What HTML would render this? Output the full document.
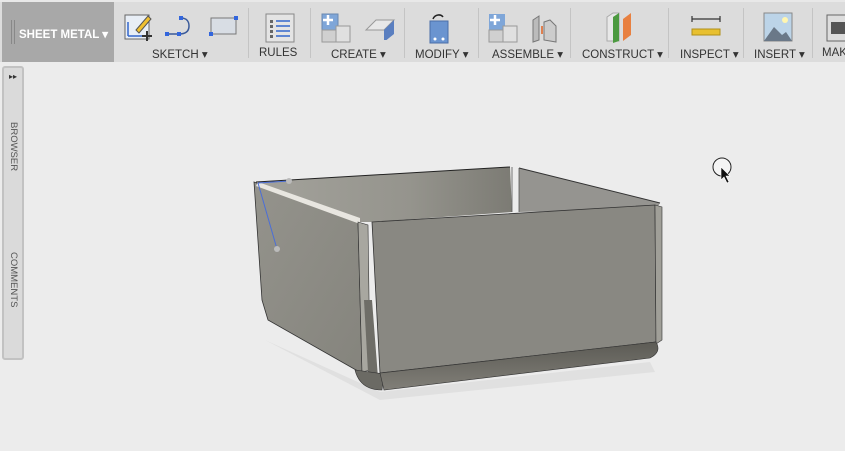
<!DOCTYPE html><html><head><meta charset="utf-8"><style>
*{margin:0;padding:0;box-sizing:border-box}
body{width:845px;height:451px;background:#ececec;font-family:"Liberation Sans",sans-serif;overflow:hidden;position:relative}
.tb{position:absolute;left:0;top:0;width:845px;height:62px;background:#dcdcdc;border-top:2px solid #e8e8e8}
.sm{position:absolute;left:2px;top:0;width:112px;height:60px;background:#a8a8a8;color:#fff;font-weight:bold;font-size:11.5px}
.sm span{position:absolute;left:17px;top:25px}
.grip{position:absolute;left:9px;top:18px;width:4px;height:24px;border-left:1px solid #888;border-right:1px solid #888}
.lbl{position:absolute;top:45px;font-size:11.5px;color:#333;white-space:nowrap}
.sep{position:absolute;top:6px;width:1px;height:50px;background:#c4c4c4}
.ic{position:absolute}
.side{position:absolute;left:2px;top:66px;width:22px;height:294px;background:#dadada;border:2px solid #c2c2c2;border-radius:3px}
.vt{position:absolute;left:4px;font-size:9.5px;color:#555;writing-mode:vertical-rl}
</style></head><body>
<div class="tb">
<div class="sm"><div class="grip"></div><span>SHEET METAL ▾</span></div>
<svg class="ic" style="left:124px;top:10px" width="30" height="30"><rect x="1" y="3" width="24" height="24" fill="#e8eef6" stroke="#666"/><path d="M4 24V10M4 24h14" stroke="#3366cc" stroke-width="1.5"/><path d="M12 18l12-14 3 3-12 14z" fill="#f0c030" stroke="#555"/><path d="M18 24h10M23 19v10" stroke="#333" stroke-width="2"/></svg>
<svg class="ic" style="left:164px;top:12px" width="32" height="24"><path d="M3 20h12c8 0 10-4 10-8s-2-8-8-8" fill="none" stroke="#3a5a9a" stroke-width="1.5"/><rect x="1" y="18" width="4" height="4" fill="#3366dd"/><rect x="13" y="18" width="4" height="4" fill="#3366dd"/><rect x="15" y="2" width="4" height="4" fill="#3366dd"/></svg>
<svg class="ic" style="left:208px;top:12px" width="32" height="24"><rect x="3" y="4" width="25" height="16" fill="#d8dde4" stroke="#777"/><rect x="1" y="18" width="4" height="4" fill="#3366dd"/><rect x="26" y="2" width="4" height="4" fill="#3366dd"/></svg>
<div class="lbl" style="left:152px">SKETCH ▾</div>
<div class="sep" style="left:248px"></div>
<svg class="ic" style="left:264px;top:11px" width="32" height="30"><rect x="2" y="1" width="28" height="28" fill="#e4e4e4" stroke="#888"/><g stroke="#3366cc" stroke-width="1.5"><path d="M12 8h14M12 13h14M12 18h14M12 23h14"/></g><g fill="#666"><rect x="6" y="7" width="3" height="3"/><rect x="6" y="12" width="3" height="3"/><rect x="6" y="17" width="3" height="3"/><rect x="6" y="22" width="3" height="3"/></g></svg>
<div class="lbl" style="left:259px">RULES</div>
<div class="sep" style="left:310px"></div>
<svg class="ic" style="left:320px;top:10px" width="34" height="32"><rect x="2" y="2" width="16" height="16" fill="#7fa6d8" stroke="#6a88b0"/><rect x="2" y="18" width="14" height="12" fill="#d0d0d0" stroke="#999"/><rect x="16" y="14" width="14" height="16" fill="#e0e0e0" stroke="#999"/><path d="M8 3v10M3 8h10" stroke="#fff" stroke-width="2.5"/></svg>
<svg class="ic" style="left:364px;top:12px" width="32" height="26"><path d="M2 16l10-10h18l-10 10z" fill="#e8e8e8" stroke="#999"/><path d="M20 16l10-10v14l-10 8z" fill="#5a7fc0"/></svg>
<div class="lbl" style="left:331px">CREATE ▾</div>
<div class="sep" style="left:404px"></div>
<svg class="ic" style="left:427px;top:9px" width="24" height="34"><rect x="3" y="10" width="18" height="22" fill="#6a94d0" stroke="#4a6ea8"/><path d="M6 8c2-5 8-5 10-2" fill="none" stroke="#222" stroke-width="1.5"/><circle cx="8" cy="28" r="1.5" fill="#fff"/><circle cx="16" cy="28" r="1.5" fill="#fff"/></svg>
<div class="lbl" style="left:415px">MODIFY ▾</div>
<div class="sep" style="left:478px"></div>
<svg class="ic" style="left:487px;top:10px" width="32" height="32"><rect x="2" y="2" width="16" height="16" fill="#7fa6d8"/><rect x="2" y="18" width="14" height="12" fill="#d0d0d0" stroke="#999"/><rect x="16" y="14" width="14" height="16" fill="#e0e0e0" stroke="#999"/><path d="M8 3v10M3 8h10" stroke="#fff" stroke-width="2.5"/></svg>
<svg class="ic" style="left:530px;top:10px" width="32" height="32"><path d="M3 8l6-4v24l-6 2z" fill="#bbb" stroke="#777"/><path d="M14 10l6-2 6 6v16l-12-2z" fill="#ccc" stroke="#777"/><path d="M12 14v8" stroke="#e06020" stroke-width="1.5"/></svg>
<div class="lbl" style="left:492px">ASSEMBLE ▾</div>
<div class="sep" style="left:570px"></div>
<svg class="ic" style="left:605px;top:9px" width="32" height="32"><path d="M2 6l6-4h6v28H2z" fill="#e8e8e8" stroke="#aaa"/><path d="M8 6l6-4v28l-6 2z" fill="#4c9a40"/><path d="M18 8l8-6v22l-8 6z" fill="#e88040"/></svg>
<div class="lbl" style="left:582px">CONSTRUCT ▾</div>
<div class="sep" style="left:668px"></div>
<svg class="ic" style="left:690px;top:14px" width="32" height="22"><path d="M2 3h28M2 0v6M30 0v6" stroke="#333" stroke-width="1.2"/><rect x="2" y="13" width="28" height="6" fill="#e8c030" stroke="#b0901a"/></svg>
<div class="lbl" style="left:680px">INSPECT ▾</div>
<div class="sep" style="left:743px"></div>
<svg class="ic" style="left:763px;top:10px" width="30" height="30"><rect x="1" y="1" width="28" height="28" fill="#bcd4e8" stroke="#888"/><circle cx="22" cy="8" r="3" fill="#fff6b0"/><path d="M1 29l10-14 8 8 4-3 6 9z" fill="#6a7888"/></svg>
<div class="lbl" style="left:754px">INSERT ▾</div>
<div class="sep" style="left:812px"></div>
<svg class="ic" style="left:826px;top:12px" width="19" height="28"><rect x="1" y="1" width="22" height="26" fill="#ddd" stroke="#666"/><rect x="5" y="8" width="14" height="12" fill="#555"/></svg>
<div class="lbl" style="left:822px">MAK</div>
</div>
<div class="side">
<div style="position:absolute;left:5px;top:4px;font-size:8px;color:#333">▸▸</div>
<div class="vt" style="top:54px">BROWSER</div>
<div class="vt" style="top:184px">COMMENTS</div>
</div>
<svg style="position:absolute;left:0;top:0" width="845" height="451">
<defs>
<linearGradient id="lp" x1="0" y1="0" x2="1" y2="1"><stop offset="0" stop-color="#94938c"/><stop offset="1" stop-color="#85847d"/></linearGradient>
<linearGradient id="bk" x1="0" y1="0" x2="1" y2="0"><stop offset="0" stop-color="#a3a29b"/><stop offset=".6" stop-color="#95948d"/><stop offset="1" stop-color="#7c7b74"/></linearGradient>
<linearGradient id="bt" x1="0" y1="0" x2="0" y2="1"><stop offset="0" stop-color="#5c5b55"/><stop offset="1" stop-color="#817f78"/></linearGradient>
</defs>
<path d="M265 340 L380 392 L650 362 L655 372 L380 400 Z" fill="#d8d8d8" opacity=".6"/>
<path d="M256 182 L510 167 L512 212 L372 222 L356 222 Z" fill="url(#bk)"/>
<path d="M519 168 L660 203 L657 208 L519 212 Z" fill="#959490"/>
<path d="M254 182 L358 222 L362 372 L356 370 L268 320 L262 300 Z" fill="url(#lp)" stroke="#333" stroke-width=".8"/>
<path d="M258 182 L360 218 L360 224 L256 186 Z" fill="#e8e6e0"/>
<path d="M358 222 L368 225 L370 370 L362 372 Z" fill="#a8a7a0" stroke="#333" stroke-width=".6"/>
<path d="M364 300 L372 300 L378 378 L368 372 Z" fill="#6e6d67"/>
<path d="M355 370 Q360 390 382 390 L384 374 Z" fill="#6b6a64" stroke="#333" stroke-width=".6"/>
<path d="M372 222 L655 205 L656 342 L380 373 Z" fill="#898882" stroke="#333" stroke-width=".8"/>
<path d="M655 205 L662 207 L662 340 L656 344 Z" fill="#a09f98" stroke="#333" stroke-width=".6"/>
<path d="M380 373 L656 342 Q662 352 650 358 L384 390 Z" fill="url(#bt)" stroke="#333" stroke-width=".6"/>
<path d="M256 182 L510 167" stroke="#222" stroke-width="1"/>
<path d="M519 168 L660 203" stroke="#333" stroke-width="1"/>
<path d="M512 167 L512 212 M519 168 L519 212" stroke="#555" stroke-width=".8"/>
<path d="M258 183 L277 249 M258 183 L289 181" stroke="#4a6ed8" stroke-width="1"/>
<circle cx="277" cy="249" r="3" fill="#bbb"/><circle cx="289" cy="181" r="3" fill="#bbb"/>
<circle cx="722" cy="167" r="9" fill="#f4f4f4" stroke="#222" stroke-width="1"/>
<path d="M721 167 L721 180 L724 177 L727 183 L729 182 L726 176 L730 176 Z" fill="#111" stroke="#fff" stroke-width=".6"/>
</svg>
</body></html>
